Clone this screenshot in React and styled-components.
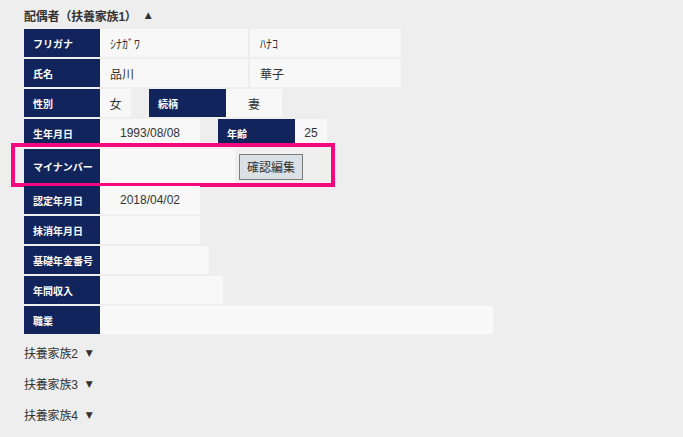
import React from "react";
import styled, { createGlobalStyle } from "styled-components";

const GlobalStyle = createGlobalStyle`
  body {
    margin: 0;
    background: #eeeeee;
    font-family: "Liberation Sans", "Noto Sans CJK JP", sans-serif;
    color: #333333;
  }
`;

const Page = styled.div`
  padding: 1px 0 0 24px;
`;

const SectionTitle = styled.div`
  height: ${(p) => (p.$open ? "28px" : "31px")};
  display: flex;
  align-items: center;
  font-size: 12px;
  font-weight: ${(p) => (p.$open ? "bold" : "normal")};
  color: #333333;
  letter-spacing: -0.2px;
  margin-top: ${(p) => (p.$first ? "0" : "0")};
`;

const Arrow = styled.span`
  font-family: "DejaVu Sans", sans-serif;
  font-size: 9px;
  margin-left: 8px;
  color: #333333;
`;

const Table = styled.div`
  display: flex;
  flex-direction: column;
  gap: 2px;
  margin-bottom: 3px;
`;

const Row = styled.div`
  display: flex;
  height: ${(p) => p.$h || 28}px;
  position: relative;
`;

const Label = styled.div`
  width: ${(p) => p.$w || 76}px;
  margin-left: ${(p) => p.$ml || 0}px;
  box-sizing: border-box;
  padding-left: 9px;
  background: #12245c;
  color: #ffffff;
  font-family: "Noto Sans CJK JP", sans-serif;
  font-size: 10px;
  font-weight: bold;
  display: flex;
  align-items: center;
  white-space: nowrap;
`;

const Value = styled.div`
  width: ${(p) => p.$w}px;
  margin-left: ${(p) => p.$ml || 0}px;
  box-sizing: border-box;
  padding-left: ${(p) => (p.$center ? 0 : 10)}px;
  background: #f8f8f8;
  font-size: 12px;
  display: flex;
  align-items: center;
  justify-content: ${(p) => (p.$center ? "center" : "flex-start")};
  white-space: nowrap;
`;

const ButtonCell = styled.div`
  width: 96px;
  box-sizing: border-box;
  padding-left: 4px;
  background: #efefef;
  display: flex;
  align-items: center;
`;

const EditButton = styled.button`
  height: 26px;
  padding: 0 7px;
  background: #d9e1e7;
  border: 1px solid #7c7c7c;
  border-radius: 0;
  font-family: "Noto Sans CJK JP", sans-serif;
  font-size: 12px;
  color: #333333;
  cursor: pointer;
`;

const Highlight = styled.div`
  position: absolute;
  left: -13px;
  top: -6px;
  width: 324px;
  height: 44px;
  box-sizing: border-box;
  border: 4px solid #f7077f;
  pointer-events: none;
`;

const simpleRows = [
  { label: "認定年月日", w: 100, value: "2018/04/02", center: true },
  { label: "抹消年月日", w: 100, value: "" },
  { label: "基礎年金番号", w: 109, value: "" },
  { label: "年間収入", w: 123, value: "" },
  { label: "職業", w: 393, value: "" },
];

const App = () => {
  return (
    <>
      <GlobalStyle />
      <Page>
        <SectionTitle $open>
          配偶者（扶養家族1）<Arrow>▲</Arrow>
        </SectionTitle>
        <Table>
          <Row>
            <Label>フリガナ</Label>
            <Value $w={148}>ｼﾅｶﾞﾜ</Value>
            <Value $w={151} $ml={2}>
              ﾊﾅｺ
            </Value>
          </Row>
          <Row>
            <Label>氏名</Label>
            <Value $w={148}>品川</Value>
            <Value $w={151} $ml={2}>
              華子
            </Value>
          </Row>
          <Row>
            <Label>性別</Label>
            <Value $w={31} $center>
              女
            </Value>
            <Label $w={77} $ml={18}>
              続柄
            </Label>
            <Value $w={56} $center>
              妻
            </Value>
          </Row>
          <Row>
            <Label>生年月日</Label>
            <Value $w={100} $center>
              1993/08/08
            </Value>
            <Label $w={77} $ml={18}>
              年齢
            </Label>
            <Value $w={32} $center>
              25
            </Value>
          </Row>
          <Row $h={35}>
            <Label>マイナンバー</Label>
            <Value $w={135} />
            <ButtonCell>
              <EditButton type="button">確認編集</EditButton>
            </ButtonCell>
            <Highlight />
          </Row>
          {simpleRows.map((r) => (
            <Row key={r.label}>
              <Label>{r.label}</Label>
              <Value $w={r.w} $center={r.center}>
                {r.value}
              </Value>
            </Row>
          ))}
        </Table>
        {[2, 3, 4].map((n) => (
          <SectionTitle key={n}>
            扶養家族{n}
            <Arrow>▼</Arrow>
          </SectionTitle>
        ))}
      </Page>
    </>
  );
};

export default App;
